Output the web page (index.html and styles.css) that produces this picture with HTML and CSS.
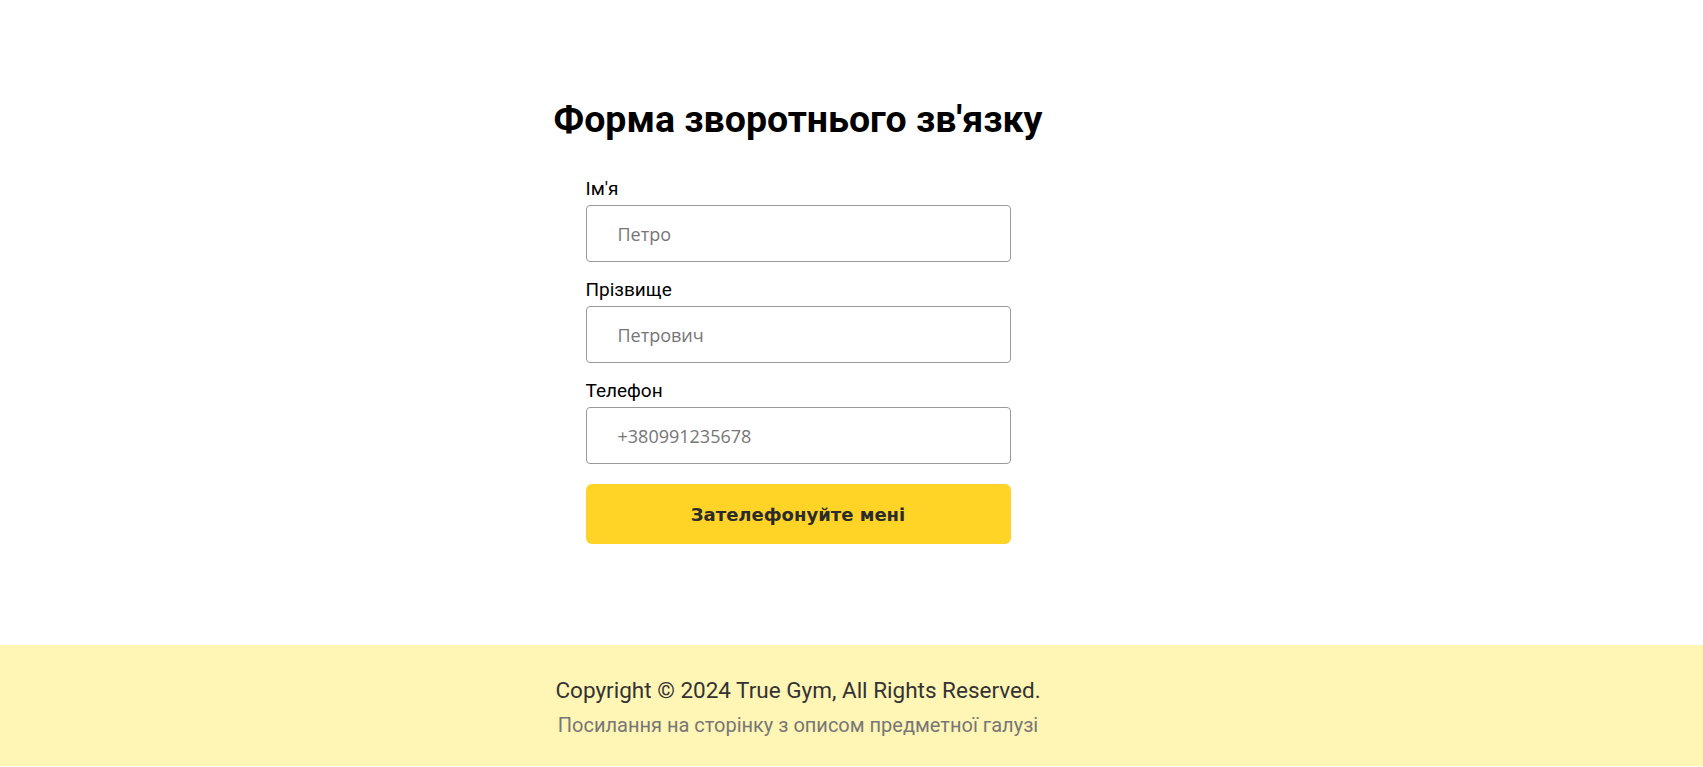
FILE: index.html
```html
<!DOCTYPE html>
<html lang="uk">
<head>
<meta charset="utf-8">
<title>Форма зворотнього зв'язку</title>
<link rel="stylesheet" href="styles.css">
</head>
<body>
<main class="page">
  <section class="contact">
    <h1 class="contact-title">Форма зворотнього зв'язку</h1>
    <form class="contact-form">
      <div class="field">
        <label class="field-label" for="name">Ім'я</label>
        <input class="field-input" id="name" type="text" placeholder="Петро">
      </div>
      <div class="field">
        <label class="field-label" for="surname">Прізвище</label>
        <input class="field-input" id="surname" type="text" placeholder="Петрович">
      </div>
      <div class="field">
        <label class="field-label" for="phone">Телефон</label>
        <input class="field-input" id="phone" type="tel" placeholder="+380991235678">
      </div>
      <button class="submit" type="button">Зателефонуйте мені</button>
    </form>
  </section>
</main>
<footer class="footer">
  <div class="footer-inner">
    <p class="copyright">Copyright © 2024 True Gym, All Rights Reserved.</p>
    <a class="footer-link" href="#">Посилання на сторінку з описом предметної галузі</a>
  </div>
</footer>
</body>
</html>
```
FILE: styles.css
```css
html, body {
  margin: 0;
  padding: 0;
  background: #ffffff;
  font-family: Roboto, "Noto Sans", sans-serif;
}

.page {
  width: 1596px;
  padding-top: 95px;
  padding-bottom: 101px;
}

.contact {
  display: flex;
  flex-direction: column;
  align-items: center;
}

.contact-title {
  margin: 0 0 36px;
  font-family: Roboto, sans-serif;
  font-weight: 700;
  font-size: 37.5px;
  line-height: 48px;
  color: #000;
}

.contact-form {
  width: 425px;
  display: flex;
  flex-direction: column;
}

.field {
  display: flex;
  flex-direction: column;
  gap: 6px;
  margin-bottom: 18px;
}

.field:last-of-type {
  margin-bottom: 20px;
}

.field-label {
  font-family: Roboto, sans-serif;
  font-size: 19px;
  line-height: 20px;
  color: #000;
}

.field-input {
  box-sizing: border-box;
  height: 57px;
  width: 100%;
  margin: 0;
  padding: 0 16px 0 31px;
  border: 1px solid #9a9a9a;
  border-radius: 4px;
  font-family: "Open Sans", "Noto Sans", sans-serif;
  font-size: 18px;
  color: #222;
  background: #fff;
  outline: none;
}

.field-input::placeholder {
  color: #767676;
}

.submit {
  height: 60px;
  width: 100%;
  border: none;
  border-radius: 6px;
  background: #ffd426;
  color: #2b2b2b;
  font-family: "DejaVu Sans", sans-serif;
  font-weight: 700;
  font-size: 18px;
  cursor: pointer;
}

.footer {
  background: #fff5b5;
}

.footer-inner {
  width: 1596px;
  padding: 32px 0 29px;
  display: flex;
  flex-direction: column;
  align-items: center;
  gap: 10px;
}

.copyright {
  margin: 0;
  font-family: Roboto, sans-serif;
  font-size: 22.5px;
  line-height: 26px;
  color: #333;
}

.footer-link {
  font-family: Roboto, sans-serif;
  font-size: 20px;
  line-height: 24px;
  color: #777;
  text-decoration: none;
}
```
